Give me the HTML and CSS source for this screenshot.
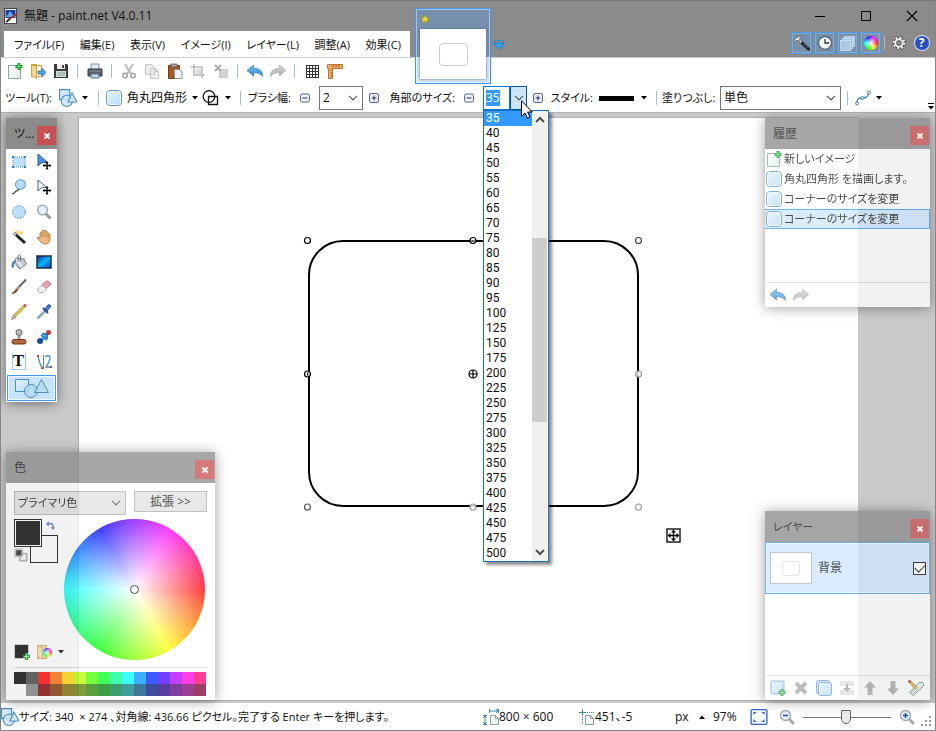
FILE: index.html
```html
<!DOCTYPE html>
<html lang="ja">
<head>
<meta charset="utf-8">
<title>無題 - paint.net V4.0.11</title>
<link rel="stylesheet" href="styles.css">
</head>
<body>
<svg class="defs" aria-hidden="true">
  <defs>
    <linearGradient id="g-blue" x1="0" y1="0" x2="0" y2="1"><stop offset="0" stop-color="#7cc0f0"/><stop offset="1" stop-color="#2f86cf"/></linearGradient>
    <linearGradient id="g-grey" x1="0" y1="0" x2="0" y2="1"><stop offset="0" stop-color="#d4d4d4"/><stop offset="1" stop-color="#aeaeae"/></linearGradient>
    <linearGradient id="g-pale" x1="0" y1="0" x2="1" y2="1"><stop offset="0" stop-color="#e4f2fd"/><stop offset="1" stop-color="#b9dbf4"/></linearGradient>
    <linearGradient id="g-grad" x1="0" y1="0" x2="1" y2="1"><stop offset="0" stop-color="#0030a0"/><stop offset=".5" stop-color="#08b4f8"/><stop offset="1" stop-color="#0540c0"/></linearGradient>
    <linearGradient id="g-page" x1="0" y1="0" x2="1" y2="1"><stop offset="0" stop-color="#ffffff"/><stop offset="1" stop-color="#dceee8"/></linearGradient>
  </defs>
  <symbol id="app" viewBox="0 0 16 16"><rect x="1.5" y=".5" width="12" height="15" fill="#fff" stroke="#444"/><rect x="2.5" y="2" width="10" height="8" fill="#153f9a"/><path d="M3 9l4-6 5 6z" fill="#5ca6ea"/><path d="M5 12l10-7" stroke="#a43c36" stroke-width="2"/><path d="M3 14l4-3" stroke="#333" stroke-width="2"/></symbol>
  <symbol id="new" viewBox="0 0 16 16"><path d="M1.500 2.500h12v13h-12z" fill="url(#g-page)" stroke="#8ba79f"/><path d="M12 0v7M8.500 3.500h7" stroke="#1c9b36" stroke-width="3"/><path d="M12 1v5M9.500 3.500h5" stroke="#5bdc62"/></symbol>
  <symbol id="open" viewBox="0 0 16 16"><path d="M1.500 1.500h5v12h-5z" fill="#efbf65" stroke="#c99337"/><path d="M5.500 2.500h6v11h-6z" fill="#fff" stroke="#d9a44c"/><path d="M1.500 1.500l5 2v12l-5-3z" fill="#f8d48c" stroke="#d6a045"/><path d="M8 8h4V5l4 4.500-4 4.500v-3H8z" fill="#4ba5e6" stroke="#2b74b3" stroke-width=".7"/></symbol>
  <symbol id="folder" viewBox="0 0 16 16"><path d="M1.500 1.500h9v13h-9z" fill="#efd9a8" stroke="#c9a357"/><path d="M1.500 1.500l5 2v12l-5-3z" fill="#f8e0ac" stroke="#d6a95d"/></symbol>
  <symbol id="save" viewBox="0 0 16 16"><path d="M1 1h13l1 1v13H1z" fill="#3b3b3b"/><path d="M4 1h8v5H4z" fill="#eee"/><path d="M9 2h2v3H9z" fill="#444"/><path d="M3 8h10v6H3z" fill="#cfe3dc"/><path d="M4 10h8M4 12h8" stroke="#8b9b96"/></symbol>
  <symbol id="print" viewBox="0 0 16 16"><path d="M4 1h8v6H4z" fill="#e4eef6" stroke="#889"/><path d="M1 6h14v7H1z" fill="#5a5f66" stroke="#363a40"/><path d="M2 8h12" stroke="#8c949d"/><path d="M4 11h8v4H4z" fill="#b3d7ee" stroke="#65727d"/></symbol>
  <symbol id="cut" viewBox="0 0 16 16"><path d="M4 1l6 10M12 1L6 11" stroke="#bdbdbd" stroke-width="2"/><circle cx="4" cy="12.500" r="2.300" fill="none" stroke="#a5a5a5" stroke-width="1.500"/><circle cx="12" cy="12.500" r="2.300" fill="none" stroke="#a5a5a5" stroke-width="1.500"/></symbol>
  <symbol id="copy" viewBox="0 0 16 16"><path d="M1.500 1.500h6l3 3v7h-9zM6.500 5.500h5l3 3v7h-8z" fill="#ededed" stroke="#c6c6c6"/><path d="M11.500 5.500v3h3" fill="none" stroke="#c6c6c6"/></symbol>
  <symbol id="paste" viewBox="0 0 16 16"><path d="M1.500 2.500h11v13h-11z" fill="#a65c2c" stroke="#6f3b17"/><path d="M4 1h6v3H4z" fill="#aaa" stroke="#555" stroke-width=".8"/><path d="M7.500 6.500h5l2.500 2v7h-7.500z" fill="#e9f2f6" stroke="#8295a0"/></symbol>
  <symbol id="crop" viewBox="0 0 16 16"><path d="M4 1v11h11M1 4h11v11" fill="none" stroke="#b9b9b9" stroke-width="1.500"/><path d="M6 6h5v5H6z" fill="#ddd"/></symbol>
  <symbol id="deselect" viewBox="0 0 16 16"><path d="M6.500 6.500h8v8h-8z" fill="#d4d4d4" stroke="#b8b8b8" stroke-dasharray="2 1"/><path d="M2 2l6 6M8 2L2 8" stroke="#aaa" stroke-width="2"/></symbol>
  <symbol id="undo" viewBox="0 0 16 16"><path d="M0 7.500L6.500 2v3.300c5 0 9 2 9.200 8.200-2-3-4.500-4-9.200-3.800V13z" fill="url(#g-blue)" stroke="#2b76b8" stroke-width=".7"/></symbol>
  <symbol id="redo" viewBox="0 0 16 16"><path d="M16 7.500L9.500 2v3.300c-5 0-9 2-9.200 8.200 2-3 4.500-4 9.200-3.800V13z" fill="url(#g-grey)" stroke="#b0b0b0" stroke-width=".7"/></symbol>
  <symbol id="grid" viewBox="0 0 16 16"><path d="M2 2.500h12.500M2 5.500h12.500M2 8.500h12.500M2 11.500h12.500M2 14.500h13M2.500 2v12.500M5.500 2v12.500M8.500 2v12.500M11.500 2v12.500M14.500 2v12.500" stroke="#333"/></symbol>
  <symbol id="ruler" viewBox="0 0 16 16"><path d="M.5 1.500h15v4h-10v10h-4v-10h-1z" fill="#eda961" stroke="#bd7634"/><path d="M6 2v2M9 2v2M12 2v2M4 7h1.500M4 10h1.500M4 13h1.500" stroke="#8d5424"/></symbol>
  <symbol id="shapes" viewBox="1 1 16 16"><path d="M1.500 1.500h9v9h-9z" fill="url(#g-pale)" stroke="#4c8fbf"/><circle cx="8" cy="11.500" r="5" fill="#c9e4f7" fill-opacity=".8" stroke="#4c8fbf"/><path d="M12.500 4.500l4.500 8H9z" fill="#d4eafa" fill-opacity=".8" stroke="#4c8fbf"/></symbol>
  <symbol id="wide-shapes" viewBox="0 0 36 22"><path d="M1.500 2.500h13v12h-13z" fill="url(#g-pale)" stroke="#4c8fbf"/><circle cx="17" cy="14" r="6.500" fill="#b5d9f3" fill-opacity=".8" stroke="#4c8fbf"/><path d="M27.500 2.500l7 13h-14z" fill="#b5d9f3" fill-opacity=".8" stroke="#4c8fbf"/></symbol>
  <symbol id="rounded" viewBox="0 0 16 16"><rect x=".5" y=".5" width="15" height="15" rx="3.500" fill="#fff" stroke="#5b97c2"/><rect x="2" y="2" width="12" height="12" rx="2" fill="url(#g-pale)"/></symbol>
  <symbol id="geometry" viewBox="0 0 18 18"><circle cx="7" cy="7.500" r="5.800" fill="none" stroke="#111" stroke-width="1.300"/><path d="M6.500 7.500h9v8h-9z" fill="none" stroke="#111" stroke-width="1.300"/></symbol>
  <symbol id="minus" viewBox="0 0 10 10"><rect x=".5" y="1" width="9" height="8" rx="1.500" fill="#eef1fb" stroke="#5b658c"/><path d="M2.500 5h5" stroke="#26315c"/></symbol>
  <symbol id="plus" viewBox="0 0 10 10"><rect x=".5" y=".5" width="9" height="9" rx="1.500" fill="#eef1fb" stroke="#5b658c"/><path d="M2.500 5h5M5 2.500v5" stroke="#26315c"/></symbol>
  <symbol id="caret" viewBox="0 0 6 4"><path d="M0 0h6L3 3.500z" fill="#000"/></symbol>
  <symbol id="chev" viewBox="0 0 10 6"><path d="M1 .8l4 4 4-4" fill="none" stroke="#555" stroke-width="1.200"/></symbol>
  <symbol id="curve" viewBox="0 0 16 16"><path d="M2 14c0-5 1-6 5-6s6-1 7-6" fill="none" stroke="#4b86b6" stroke-width="1.300"/><g fill="#fff" stroke="#3f7cae"><circle cx="2" cy="13.500" r="1.500"/><circle cx="7.500" cy="8" r="1.500"/><circle cx="14" cy="2.500" r="1.500"/></g></symbol>
  <symbol id="hammer" viewBox="0 0 18 18"><path d="M8 8l7.500 7" stroke="#1c1c1c" stroke-width="3" stroke-linecap="round"/><path d="M10 9.500l5 4.500" stroke="#777" stroke-width=".7"/><path d="M5.500 5.500l3 3" stroke="#c4cad2" stroke-width="2"/><path d="M1 8.500c0-3 2-6 8.500-6.500L6.500 4.500 7 6 5 7 4 6z" fill="#e6eaf0" stroke="#4a5968" stroke-width=".7"/></symbol>
  <symbol id="clock" viewBox="0 0 16 16"><circle cx="8" cy="8" r="6.500" fill="#f3f7f8" stroke="#596878" stroke-width="1.400"/><path d="M8 4v4h4" fill="none" stroke="#333" stroke-width="1.300"/></symbol>
  <symbol id="layers" viewBox="0 0 16 16"><g fill="#a3c5e4" stroke="#cfe3f4" stroke-width=".8"><rect x="4.500" y="1.500" width="10" height="10"/><rect x="2.500" y="3.500" width="10" height="10"/><rect x=".5" y="5.500" width="10" height="10" fill="#a9c9e6"/></g></symbol>
  <symbol id="gear" viewBox="0 0 16 16"><circle cx="8" cy="8" r="5.200" fill="none" stroke="#4a4a4a" stroke-width="4" stroke-dasharray="2.300 1.800"/><circle cx="8" cy="8" r="3.800" fill="none" stroke="#4a4a4a" stroke-width="3.500"/><circle cx="8" cy="8" r="5" fill="none" stroke="#eee" stroke-width="3" stroke-dasharray="1.700 2.230"/><circle cx="8" cy="8" r="3.700" fill="none" stroke="#eee" stroke-width="2"/></symbol>
  <symbol id="cross" viewBox="0 0 8 8"><path d="M1.500 1.500l5 5M6.500 1.500l-5 5" stroke="#fff" stroke-width="2"/></symbol>
  <symbol id="t-rect" viewBox="0 0 16 16"><rect x="2" y="3" width="12" height="10" fill="#bfe0fa" stroke="#4e90c8" stroke-dasharray="1 1"/><path d="M1 2h2v2H1zM13 2h2v2h-2zM1 12h2v2H1zM13 12h2v2h-2z" fill="#2f7fc6"/></symbol>
  <symbol id="t-move" viewBox="0 0 16 16"><path d="M2 0v12l3-3 6-1z" fill="#4b8edb" stroke="#2861a8"/><path d="M11 8v7M7.500 11.500h7" stroke="#111" stroke-width="1.500"/><path d="M11 7l1.500 2h-3zM11 16l1.500-2h-3zM6.500 11.500l2-1.500v3zM15.500 11.500l-2-1.500v3z"/></symbol>
  <symbol id="t-movesel" viewBox="0 0 16 16"><path d="M2 1v11l3-3 5-1z" fill="#fff" stroke="#4d6480"/><path d="M11 8v7M7.500 11.500h7" stroke="#111" stroke-width="1.500"/><path d="M11 7l1.500 2h-3zM11 16l1.500-2h-3zM6.500 11.500l2-1.500v3zM15.500 11.500l-2-1.500v3z"/></symbol>
  <symbol id="t-lasso" viewBox="0 0 16 16"><ellipse cx="9.500" cy="5.500" rx="5" ry="4.800" fill="#b9dcf8" stroke="#4f94cc"/><path d="M7 10c1 3-2 1-3 3s-1 1-3 2" fill="none" stroke="#444" stroke-width="1.300"/></symbol>
  <symbol id="t-ellipse" viewBox="0 0 16 16"><circle cx="8" cy="8" r="6.300" fill="#c0e0fa" stroke="#4b91cc" stroke-dasharray="2 1.300"/></symbol>
  <symbol id="t-zoom" viewBox="0 0 16 16"><path d="M9.500 9.500l5 5" stroke="#999" stroke-width="3"/><circle cx="6.500" cy="6" r="4.800" fill="#e4f1fa" stroke="#a3abb2" stroke-width="1.500"/></symbol>
  <symbol id="t-wand" viewBox="0 0 16 16"><path d="M3 4l11 10" stroke="#222" stroke-width="3"/><path d="M3 4l2 2" stroke="#ccc" stroke-width="2"/><path d="M7 1v4M5 3h4M10 2v4M8 4h4M3 0v2" stroke="#f0c642"/></symbol>
  <symbol id="t-pan" viewBox="0 0 16 16"><path d="M4 9V4q1-1.500 2 0V2q1-1.500 2 0V1.500q1-1.500 2 .5v1q1-1.500 2 .5V5q1-1 2 .5V10q0 5-5 5-3 0-5-3L1 9q1-2 3 0z" fill="#eab880" stroke="#ad6f35" stroke-width=".8"/><path d="M6 4v4M8 3v5M10 3.500V8M12 5v4" stroke="#ad6f35" stroke-width=".6"/></symbol>
  <symbol id="t-fill" viewBox="0 0 16 16"><path d="M5 4l8 1 2.500 5-7 5L3 8z" fill="#c4c9cf" stroke="#747b84"/><path d="M5 5l6 8" stroke="#f4f4f4" stroke-width="2"/><path d="M7 8V2q1.500-2 2.500 0v5" fill="none" stroke="#777"/><path d="M5 6C1 7 0 10 1 14l2-1c0-3 0-4 2-5z" fill="#4c7fc4"/></symbol>
  <symbol id="t-grad" viewBox="0 0 16 16"><rect x="1" y="2" width="14" height="12" fill="url(#g-grad)" stroke="#1b2a44" stroke-width="1.500"/></symbol>
  <symbol id="t-brush" viewBox="0 0 16 16"><path d="M15 .5L7 9" stroke="#5c6672" stroke-width="2"/><path d="M8 8l-3 3" stroke="#aaa" stroke-width="3"/><path d="M6 9.500L0 15q5 0 7-4z" fill="#7a4522"/></symbol>
  <symbol id="t-eraser" viewBox="0 0 16 16"><path d="M1 11l9-9q3-1 5 3l-8 8q-3 2-6-2z" fill="#f19eb1" stroke="#b2697a" stroke-width=".7"/><path d="M1 11l4.500-4.500 5.500 3.500-4 3.500q-3 1.500-6-2.500z" fill="#eee" stroke="#aaa" stroke-width=".7"/></symbol>
  <symbol id="t-pencil" viewBox="0 0 16 16"><path d="M13 2.500L3.500 12" stroke="#a58a2c" stroke-width="3"/><path d="M13 2.500L3.500 12" stroke="#f5d85e" stroke-width="1.500"/><path d="M15 .5l-2 2" stroke="#d25c52" stroke-width="3"/><path d="M.5 15.500L2.500 11 5 13.500z" fill="#e8c79c" stroke="#555" stroke-width=".6"/></symbol>
  <symbol id="t-picker" viewBox="0 0 16 16"><path d="M9.500 6.500L3 13l-1.500 1.500" stroke="#8da9c4" stroke-width="2.500"/><path d="M7 4l5 5" stroke="#27459c" stroke-width="2"/><path d="M9 5l3-4q2-1 3 1l-4 5z" fill="#4a7de2" stroke="#2a50a6"/></symbol>
  <symbol id="t-stamp" viewBox="0 0 16 16"><circle cx="8" cy="3.500" r="3" fill="#bbb" stroke="#666"/><path d="M7 6.500h2V11H7z" fill="#aaa" stroke="#777" stroke-width=".6"/><rect x="1" y="10.500" width="14" height="4.500" rx="2" fill="#b5683d" stroke="#713a1c"/></symbol>
  <symbol id="t-recolor" viewBox="0 0 16 16"><path d="M5 12l7-8" stroke="#4ea5dc" stroke-width="3"/><path d="M5 6l6 5M6 5h5v5" fill="none" stroke="#2886c6" stroke-width="2"/><circle cx="4" cy="12" r="3" fill="#1c4ea4"/><circle cx="12.500" cy="3.500" r="2.500" fill="#bd3d3d"/></symbol>
  <symbol id="t-line" viewBox="0 0 16 16"><path d="M2 2q1 6 4 12" fill="none" stroke="#4b94cc" stroke-width="1.400"/><path d="M7.500 1v14" stroke="#777"/><path d="M9 3q5-3 5 1 0 3-4 9h5" fill="none" stroke="#4b94cc" stroke-width="1.400"/><path d="M1 1h2v2H1zM5 13h2v2H5zM14 12h2v2h-2z" fill="#c44"/></symbol>
  <symbol id="swap" viewBox="0 0 10 10"><path d="M1 3h5q2 0 2 5" fill="none" stroke="#4d68c8" stroke-width="1.500"/><path d="M0 3l3-3v6zM8 10L5 7h5z" fill="#4d68c8"/></symbol>
  <symbol id="reset" viewBox="0 0 16 16"><path d="M6.500 6.500h8v8h-8z" fill="#fff" stroke="#aaa" stroke-width="2"/><path d="M1.500 1.500h8v8h-8z" fill="#222" stroke="#bbb" stroke-width="2"/></symbol>
  <symbol id="addcolor" viewBox="0 0 16 16"><path d="M.5.5h14v14H.5z" stroke="#ccc"/><path d="M12.500 9v7M9 12.500h7" stroke="#178533" stroke-width="3"/><path d="M12.500 10v5M10 12.500h5" stroke="#8ce894"/></symbol>
  <symbol id="l-add" viewBox="0 0 16 16"><rect x="1" y="1" width="13" height="13" rx="1" fill="url(#g-pale)" stroke="#7aabd0"/><path d="M12 9v7M8.500 12.500h7" stroke="#1d9b3c" stroke-width="3"/><path d="M12 10v5M9.500 12.500h5" stroke="#92ec99"/></symbol>
  <symbol id="l-del" viewBox="0 0 16 16"><path d="M3 3l10 10M13 3L3 13" stroke="#a9a9a9" stroke-width="4"/></symbol>
  <symbol id="l-dup" viewBox="0 0 16 16"><rect x=".5" y=".5" width="13" height="13" rx="2" fill="#c9e3f7" stroke="#6ba2cf"/><rect x="2.500" y="2.500" width="13" height="13" rx="2" fill="url(#g-pale)" stroke="#6ba2cf"/></symbol>
  <symbol id="l-merge" viewBox="0 0 16 16"><path d="M1 1h14v5H1zM1 10h14v5H1z" fill="#ddd"/><path d="M8 4v5" stroke="#a3a3a3" stroke-width="2"/><path d="M4 8h8l-4 4z" fill="#a3a3a3"/></symbol>
  <symbol id="l-up" viewBox="0 0 16 16"><path d="M8 1l6 6.500h-3.500V15h-5V7.500H2z" fill="#a9a9a9"/></symbol>
  <symbol id="l-down" viewBox="0 0 16 16"><path d="M8 15l6-6.500h-3.500V1h-5v7.500H2z" fill="#a9a9a9"/></symbol>
  <symbol id="l-prop" viewBox="0 0 16 16"><path d="M1.500 12.500L11 2.500h3.500l1 1V6L5.500 15.500z" fill="#dfeee8" stroke="#6f9186"/><path d="M4 12.500l4-4M6 13l4-4" stroke="#a8c1b8"/><path d="M1.500 1.500l7 7" stroke="#94751f" stroke-width="3"/><path d="M1.500 1.500l7 7" stroke="#f2cf56" stroke-width="1.500"/><path d="M.5.500l2 2" stroke="#c53d35" stroke-width="2.500"/></symbol>
  <symbol id="docsize" viewBox="0 0 16 16"><path d="M7 2h8M2 7v8M6.500 0v4M15.500 0v4M0 6.500h4M0 15.500h4" stroke="#3889b6"/><path d="M13 0l2 2-2 2M.5 9L2 7l1.500 2M.5 13L2 15l1.500-2" fill="none" stroke="#3889b6"/><path d="M7.500 6.500h5l3 3v6h-8z" fill="#f0f7f5" stroke="#88a39b"/><path d="M12.500 6.500v3h3" fill="none" stroke="#88a39b"/></symbol>
  <symbol id="cursorpos" viewBox="0 0 16 16"><path d="M0 3.500h7M3.500 0v7" stroke="#3889b6"/><path d="M8 3.500h8M3.500 8v8" stroke="#3889b6" stroke-dasharray="1 1"/><path d="M6.500 6.500h5l3 3v6h-8z" fill="#f0f7f5" stroke="#88a39b"/><path d="M11.500 6.500v3h3" fill="none" stroke="#88a39b"/></symbol>
  <symbol id="fit" viewBox="0 0 16 16"><rect x="1" y="1.500" width="14" height="13" rx="1" fill="#f6f9ff" stroke="#3c62d6" stroke-width="1.200"/><path d="M3 6V3.500h3zM10 3.500h3V6zM3 10v2.500h3zM13 10v2.500h-3z" fill="#3c62d6"/></symbol>
  <symbol id="z-out" viewBox="0 0 16 16"><path d="M10 10l5 5" stroke="#aaa" stroke-width="3"/><circle cx="6.500" cy="6.500" r="5" fill="#e3f0fb" stroke="#9faab4" stroke-width="1.300"/><path d="M4 6.500h5" stroke="#2648b0" stroke-width="1.500"/></symbol>
  <symbol id="z-in" viewBox="0 0 16 16"><path d="M10 10l5 5" stroke="#aaa" stroke-width="3"/><circle cx="6.500" cy="6.500" r="5" fill="#e3f0fb" stroke="#9faab4" stroke-width="1.300"/><path d="M4 6.500h5M6.500 4v5" stroke="#2648b0" stroke-width="1.500"/></symbol>
</svg>

<header class="top">
  <div class="titlebar">
    <svg class="i16"><use href="#app"/></svg>
    <h1>無題 - paint.net V4.0.11</h1>
    <div class="winbtns">
      <button aria-label="最小化"><svg class="i12" viewBox="0 0 12 12"><path d="M1 6.500h10" stroke="#000"/></svg></button>
      <button aria-label="最大化"><svg class="i12" viewBox="0 0 12 12"><path d="M1.500 1.500h9v9h-9z" fill="none" stroke="#000"/></svg></button>
      <button aria-label="閉じる"><svg class="i12" viewBox="0 0 12 12"><path d="M1 1l10 10M11 1L1 11" stroke="#000" stroke-width="1.100"/></svg></button>
    </div>
  </div>
  <div class="menurow">
    <nav class="menu">
      <button>ファイル(F)</button><button>編集(E)</button><button>表示(V)</button><button>イメージ(I)</button><button>レイヤー(L)</button><button>調整(A)</button><button>効果(C)</button>
    </nav>
    <div class="docs">
      <button class="doc" aria-label="無題">
        <svg class="star" viewBox="0 0 10 10"><path d="M5 .5l1.400 3 3.100.3-2.300 2.200.7 3.200L5 7.500 2.100 9.200l.7-3.200L.5 3.800l3.100-.3z" fill="#e5d73f" stroke="#8c8430" stroke-width=".7"/></svg>
        <span class="sheet"><span class="mini"></span></span>
      </button>
    </div>
    <button class="doclist" aria-label="画像の一覧"><svg viewBox="0 0 12 12"><path d="M1 2.500h10" stroke="#1687e0" stroke-dasharray="2 1"/><path d="M1 5h10v1L6 11 1 6z" fill="#32a5f5" stroke="#1273c4" stroke-width=".8"/></svg></button>
    <div class="toggles">
      <button class="on" aria-label="ツール"><svg class="i18"><use href="#hammer"/></svg></button>
      <button class="on" aria-label="履歴"><svg class="i16"><use href="#clock"/></svg></button>
      <button class="on" aria-label="レイヤー"><svg class="i16"><use href="#layers"/></svg></button>
      <button class="on" aria-label="色"><span class="hue small"></span></button>
      <i class="sep"></i>
      <button aria-label="設定"><svg class="i16"><use href="#gear"/></svg></button>
      <button aria-label="ヘルプ"><span class="help">?</span></button>
    </div>
  </div>
</header>

<div class="toolbar" role="toolbar">
  <button aria-label="新規"><svg class="i16"><use href="#new"/></svg></button>
  <button aria-label="開く"><svg class="i16"><use href="#open"/></svg></button>
  <button aria-label="保存"><svg class="i16"><use href="#save"/></svg></button>
  <i class="sep"></i>
  <button aria-label="印刷"><svg class="i16"><use href="#print"/></svg></button>
  <i class="sep"></i>
  <button aria-label="切り取り"><svg class="i16"><use href="#cut"/></svg></button>
  <button aria-label="コピー"><svg class="i16"><use href="#copy"/></svg></button>
  <button aria-label="貼り付け"><svg class="i16"><use href="#paste"/></svg></button>
  <button aria-label="トリミング"><svg class="i16"><use href="#crop"/></svg></button>
  <button aria-label="選択の解除"><svg class="i16"><use href="#deselect"/></svg></button>
  <i class="sep"></i>
  <button aria-label="元に戻す"><svg class="i16"><use href="#undo"/></svg></button>
  <button aria-label="やり直し"><svg class="i16"><use href="#redo"/></svg></button>
  <i class="sep"></i>
  <button aria-label="グリッド"><svg class="i16"><use href="#grid"/></svg></button>
  <button aria-label="ルーラー"><svg class="i16"><use href="#ruler"/></svg></button>
</div>

<div class="options" role="toolbar">
  <span class="lbl">ツール(T):</span>
  <button class="drop" aria-label="ツールの選択"><svg class="i18"><use href="#shapes"/></svg><svg class="caret"><use href="#caret"/></svg></button>
  <i class="sep"></i>
  <button class="drop"><svg class="i16"><use href="#rounded"/></svg>角丸四角形<svg class="caret"><use href="#caret"/></svg></button>
  <button class="drop" aria-label="描画モード"><svg class="i18"><use href="#geometry"/></svg><svg class="caret"><use href="#caret"/></svg></button>
  <i class="sep"></i>
  <label class="lbl" for="brush">ブラシ幅:</label>
  <button aria-label="ブラシ幅を減らす"><svg class="i10"><use href="#minus"/></svg></button>
  <span class="pick narrow"><select id="brush"><option>2</option></select><svg class="chev"><use href="#chev"/></svg></span>
  <button aria-label="ブラシ幅を増やす"><svg class="i10"><use href="#plus"/></svg></button>
  <label class="lbl" for="corner">角部のサイズ:</label>
  <button aria-label="サイズを減らす"><svg class="i10"><use href="#minus"/></svg></button>
  <div class="combo">
    <span class="field"><input id="corner" type="text" value="35"></span>
    <button class="arrow" aria-label="一覧を開く"><svg class="chev"><use href="#chev"/></svg></button>
    <div class="popup">
      <ul id="sizes" role="listbox" aria-label="角部のサイズ"></ul>
      <div class="scroll">
        <svg class="chev" viewBox="0 0 10 6"><path d="M1 5l4-4 4 4" fill="none" stroke="#505050" stroke-width="2"/></svg>
        <div class="before"></div><div class="thumb"></div><div class="after"></div>
        <svg class="chev" viewBox="0 0 10 6"><path d="M1 1l4 4 4-4" fill="none" stroke="#505050" stroke-width="2"/></svg>
      </div>
    </div>
    <svg class="pointer" viewBox="0 0 12 19"><path d="M.5.800v15.500l3.600-3.300 2.300 5.300 2.500-1.100-2.300-5.200h4.700z" fill="#fff" stroke="#000"/></svg>
  </div>
  <button aria-label="サイズを増やす"><svg class="i10"><use href="#plus"/></svg></button>
  <span class="lbl">スタイル:</span>
  <button class="drop style" aria-label="線のスタイル"><span class="stroke"></span><svg class="caret"><use href="#caret"/></svg></button>
  <i class="sep"></i>
  <label class="lbl" for="fill">塗りつぶし:</label>
  <span class="pick"><select id="fill"><option>単色</option></select><svg class="chev"><use href="#chev"/></svg></span>
  <i class="sep"></i>
  <button class="drop" aria-label="曲線の種類"><svg class="i16"><use href="#curve"/></svg><svg class="caret"><use href="#caret"/></svg></button>
  <button class="more" aria-label="その他"><svg viewBox="0 0 6 7"><path d="M0 .5h6" stroke="#000"/><path d="M0 3h6L3 6.500z"/></svg></button>
</div>

<main class="workspace">
  <div class="canvas">
    <svg viewBox="0 1 779 582" preserveAspectRatio="xMinYMin meet" role="img" aria-label="角丸四角形">
      <rect x="230" y="124" width="329" height="265" rx="34" fill="none" stroke="#000" stroke-width="2"/>
      <g fill="#fff" fill-opacity=".8" stroke="#000" stroke-width="1.200">
        <circle cx="228.500" cy="123.500" r="3"/><circle cx="394" cy="123.500" r="3"/><circle cx="559.500" cy="123.500" r="3" stroke="#444"/>
        <circle cx="228.500" cy="257" r="3"/><circle cx="394" cy="257" r="4"/>
        <circle cx="228.500" cy="390" r="3" stroke="#555"/>
        <g stroke="#999"><circle cx="559.500" cy="257" r="3"/><circle cx="394" cy="390" r="3"/><circle cx="559.500" cy="390" r="3"/></g>
      </g>
      <path d="M390 257h8M394 253v8" stroke="#000" stroke-width="1.200"/>
      <path d="M228.500 255.500v3M392.500 124h3" stroke="#000"/>
      <path d="M588 412h13v13h-13z" fill="#fff" stroke="#222" stroke-width="1.500"/>
      <path d="M594.500 414v9M590 418.500h9" stroke="#000" stroke-width="1.300"/>
      <path d="M594.500 412.500l2.500 3h-5zM594.500 424.500l2.500-3h-5zM588.500 418.500l3-2.500v5zM600.500 418.500l-3-2.500v5z"/>
    </svg>
  </div>

  <section class="panel tools" aria-label="ツール">
    <div class="cap"><h2>ツ...</h2><button class="close" aria-label="閉じる"><svg><use href="#cross"/></svg></button></div>
    <div class="toolgrid">
      <button aria-label="四角形選択"><svg class="i16"><use href="#t-rect"/></svg></button>
      <button aria-label="ピクセルの移動"><svg class="i16"><use href="#t-move"/></svg></button>
      <button aria-label="投げ縄選択"><svg class="i16"><use href="#t-lasso"/></svg></button>
      <button aria-label="選択範囲の移動"><svg class="i16"><use href="#t-movesel"/></svg></button>
      <button aria-label="楕円選択"><svg class="i16"><use href="#t-ellipse"/></svg></button>
      <button aria-label="ズーム"><svg class="i16"><use href="#t-zoom"/></svg></button>
      <button aria-label="魔法の杖"><svg class="i16"><use href="#t-wand"/></svg></button>
      <button aria-label="パン"><svg class="i16"><use href="#t-pan"/></svg></button>
      <button aria-label="塗りつぶし"><svg class="i16"><use href="#t-fill"/></svg></button>
      <button aria-label="グラデーション"><svg class="i16"><use href="#t-grad"/></svg></button>
      <button aria-label="ブラシ"><svg class="i16"><use href="#t-brush"/></svg></button>
      <button aria-label="消しゴム"><svg class="i16"><use href="#t-eraser"/></svg></button>
      <button aria-label="鉛筆"><svg class="i16"><use href="#t-pencil"/></svg></button>
      <button aria-label="カラーピッカー"><svg class="i16"><use href="#t-picker"/></svg></button>
      <button aria-label="クローンスタンプ"><svg class="i16"><use href="#t-stamp"/></svg></button>
      <button aria-label="色の変更"><svg class="i16"><use href="#t-recolor"/></svg></button>
      <button aria-label="テキスト"><span class="glyph">T</span></button>
      <button aria-label="直線または曲線"><svg class="i16"><use href="#t-line"/></svg></button>
      <button class="current" aria-label="図形"><svg><use href="#wide-shapes"/></svg></button>
    </div>
  </section>

  <section class="panel history" aria-label="履歴">
    <div class="cap"><h2>履歴</h2><button class="close" aria-label="閉じる"><svg><use href="#cross"/></svg></button></div>
    <ul>
      <li><svg class="i16"><use href="#new"/></svg>新しいイメージ</li>
      <li><svg class="i16"><use href="#rounded"/></svg>角丸四角形 を描画します。</li>
      <li><svg class="i16"><use href="#rounded"/></svg>コーナーのサイズを変更</li>
      <li class="sel"><svg class="i16"><use href="#rounded"/></svg>コーナーのサイズを変更</li>
    </ul>
    <div class="foot">
      <button aria-label="元に戻す"><svg class="i16"><use href="#undo"/></svg></button>
      <button aria-label="やり直し"><svg class="i16"><use href="#redo"/></svg></button>
    </div>
  </section>

  <section class="panel colors" aria-label="色">
    <div class="cap"><h2>色</h2><button class="close" aria-label="閉じる"><svg><use href="#cross"/></svg></button></div>
    <div class="row">
      <span class="pick soft"><select aria-label="編集する色"><option>プライマリ色</option></select><svg class="chev"><use href="#chev"/></svg></span>
      <button class="expand">拡張 &gt;&gt;</button>
    </div>
    <div class="mix">
      <div class="side">
        <div class="pair">
          <button class="primary" aria-label="プライマリ"></button>
          <button class="swap" aria-label="入れ替え"><svg><use href="#swap"/></svg></button>
          <button class="reset" aria-label="白黒に戻す"><svg><use href="#reset"/></svg></button>
          <button class="secondary" aria-label="セカンダリ"></button>
        </div>
        <div class="acts">
          <button aria-label="色を追加"><svg class="i16"><use href="#addcolor"/></svg></button>
          <button class="drop" aria-label="パレット"><span class="folder"><svg class="i16"><use href="#folder"/></svg><span class="hue dot"></span></span><svg class="caret"><use href="#caret"/></svg></button>
        </div>
      </div>
      <div class="hue wheel"><span class="mark"></span></div>
    </div>
    <div class="palette" id="palette"></div>
  </section>

  <section class="panel layerlist" aria-label="レイヤー">
    <div class="cap"><h2>レイヤー</h2><button class="close" aria-label="閉じる"><svg><use href="#cross"/></svg></button></div>
    <div class="layer">
      <span class="thumbnail"><span class="mini"></span></span>
      <label for="visible">背景</label>
      <input type="checkbox" id="visible" checked>
    </div>
    <div class="foot">
      <button aria-label="追加"><svg class="i16"><use href="#l-add"/></svg></button>
      <button aria-label="削除"><svg class="i16"><use href="#l-del"/></svg></button>
      <button aria-label="複製"><svg class="i16"><use href="#l-dup"/></svg></button>
      <button aria-label="結合"><svg class="i16"><use href="#l-merge"/></svg></button>
      <button aria-label="上へ"><svg class="i16"><use href="#l-up"/></svg></button>
      <button aria-label="下へ"><svg class="i16"><use href="#l-down"/></svg></button>
      <button aria-label="プロパティ"><svg class="i16"><use href="#l-prop"/></svg></button>
    </div>
  </section>
</main>

<footer class="status">
  <span class="msg"><svg class="i18"><use href="#shapes"/></svg>サイズ: 340 &nbsp;× 274 、対角線: 436.66 ピクセル。完了する Enter キーを押します。</span>
  <span><svg class="i16"><use href="#docsize"/></svg>800 × 600</span>
  <span><svg class="i16"><use href="#cursorpos"/></svg>451、-5</span>
  <button class="unit">px<svg class="caret up"><use href="#caret"/></svg></button>
  <span>97%</span>
  <button aria-label="ウィンドウに合わせる"><svg class="i18"><use href="#fit"/></svg></button>
  <button aria-label="縮小"><svg class="i16"><use href="#z-out"/></svg></button>
  <input type="range" min="0" max="100" value="49" aria-label="ズーム">
  <button aria-label="拡大"><svg class="i16"><use href="#z-in"/></svg></button>
  <svg class="grip" viewBox="0 0 10 10"><path d="M8 0h2v2H8zM4 4h2v2H4zM8 4h2v2H8zM0 8h2v2H0zM4 8h2v2H4zM8 8h2v2H8z" fill="#999"/></svg>
</footer>
<script src="script.js"></script>
</body>
</html>
```
FILE: styles.css
```css
* { box-sizing: border-box; }
html, body { height: 100%; }
body {
  margin: 0;
  display: flex;
  flex-direction: column;
  border: 1px solid #858585;
  border-top-color: #777;
  background: #cacaca;
  color: #111;
  font: 12px/16px "Open Sans", "Noto Sans CJK JP", sans-serif;
  font-feature-settings: "palt";
  overflow: hidden;
}
button, input, select {
  font: inherit;
  font-feature-settings: inherit;
  color: inherit;
  margin: 0;
}
button {
  display: flex;
  align-items: center;
  justify-content: center;
  padding: 0;
  border: 0;
  background: none;
  white-space: nowrap;
}
h1, h2 { margin: 0; font-size: 12px; font-weight: 400; white-space: nowrap; }
ul { list-style: none; margin: 0; padding: 0; }
svg { display: block; flex: none; overflow: visible; }
.defs { position: absolute; width: 0; height: 0; }
.i10 { width: 10px; height: 10px; }
.i12 { width: 12px; height: 12px; }
.i16 { width: 16px; height: 16px; }
.i18 { width: 18px; height: 18px; }
.caret { width: 6px; height: 4px; }
.chev { width: 10px; height: 6px; }
.sep { width: 1px; height: 14px; background: #a9bccb; justify-self: center; }
.menu, .lbl, .msg, .history li, .layerlist h2, .soft { font-size: 11px; }

/* Title bar and menu */
.top { background: #8b8b8b; flex: none; }
.titlebar { display: flex; align-items: center; height: 30px; padding-left: 2px; gap: 5px; }
.winbtns { display: flex; margin-left: auto; }
.winbtns button { width: 46px; height: 28px; }
.menurow { display: flex; align-items: center; height: 26px; padding-left: 3px; }
.menu {
  display: flex;
  align-items: center;
  justify-content: space-between;
  width: 406px;
  height: 26px;
  padding: 2px 9px 0 10px;
  background: #fff;
}
.docs { position: relative; align-self: stretch; width: 76px; margin-left: 5px; }
.doc {
  position: absolute;
  left: 0;
  top: -23px;
  z-index: 5;
  width: 76px;
  height: 76px;
  flex-direction: column;
  align-items: stretch;
  justify-content: flex-start;
  padding: 5px 4px 4px;
  gap: 5px;
  border: 1px solid #3d97ee;
  box-shadow: inset 0 0 0 1px rgba(255,255,255,.45);
  background: linear-gradient(#7690ad 48px, #d0e4f8 48px);
}
.star { width: 10px; height: 10px; }
.sheet { display: grid; place-items: center; flex: 1; background: #fff; box-shadow: 0 0 2px #41658c; }
.mini { width: 29px; height: 23px; border: 1px solid #ccc; border-radius: 4px; }
.doclist { margin-left: 2px; }
.doclist svg { width: 12px; height: 12px; }
.toggles { display: flex; align-items: center; gap: 2px; margin-left: auto; padding: 0 3px 2px 0; }
.toggles button { width: 21px; height: 22px; }
.toggles .sep { margin: 0 1px; background: #b5b5b5; }
.toggles .on { border: 1px solid #429bf2; background: #7690ad; box-shadow: inset 0 0 0 1px #8fa6bd; }
.help {
  width: 14px;
  height: 14px;
  border-radius: 50%;
  background: #2850c4;
  box-shadow: 0 0 0 1px #d7def0;
  color: #fff;
  font-weight: 700;
  line-height: 14px;
}

/* Toolbars */
.toolbar { display: flex; align-items: center; gap: 3px; flex: none; height: 27px; padding-left: 4px; background: #fff; border-top: 1px solid #ccc; }
.toolbar button { width: 20px; height: 22px; }
.toolbar .sep { margin: 0 4px 0 3px; }
.options {
  display: grid;
  grid-template-columns: 53px 36px 11px 96px 34px 12px 50px 18px 54px 12px 80px 18px 54px 12px 54px 52px 12px 58px 121px 12px 35px 1fr;
  align-items: center;
  flex: none;
  height: 28px;
  padding-left: 3px;
  background: #fff;
}
.lbl { padding-right: 5px; text-align: right; white-space: nowrap; }
.drop { justify-content: flex-start; gap: 5px; height: 22px; padding-left: 2px; }
.stroke { width: 35px; height: 5px; background: #000; }
.style { gap: 7px; padding-left: 1px; }
.more { justify-self: end; align-self: end; width: 8px; height: 12px; }
.more svg { width: 6px; height: 7px; }
.pick { display: grid; align-items: center; height: 24px; border: 1px solid #767676; background: #fff; }
.pick.narrow { width: 44px; justify-self: center; }
.pick select, .pick .chev { grid-area: 1 / 1; }
.pick select { appearance: none; width: 100%; height: 22px; padding: 0 3px; border: 0; background: none; outline: 0; }
.pick .chev { justify-self: end; margin-right: 4px; pointer-events: none; }
.combo { position: relative; display: flex; justify-self: center; width: 44px; height: 24px; }
.field { display: flex; align-items: center; width: 27px; padding-left: 2px; border: 1px solid #0078d7; background: #fff; }
.field input { width: 14px; height: 16px; padding: 0; border: 0; outline: 0; background: #3399ff; color: #fff; }
.arrow { width: 17px; border: 1px solid #005499; background: #cce4f7; }
.popup {
  position: absolute;
  left: 0;
  top: 24px;
  z-index: 20;
  display: flex;
  width: 66px;
  padding-right: 1px;
  border: 1px solid #1670b5;
  background: #fff;
  box-shadow: 3px 3px 3px rgba(0,0,0,.45);
  font-family: Roboto, sans-serif;
}
.popup ul { flex: 1; }
.popup li { height: 15px; padding-left: 2px; line-height: 15px; }
.popup li[aria-selected="true"] { background: #3399ff; color: #fff; }
.scroll { display: flex; flex-direction: column; align-items: center; width: 15px; padding: 6px 0; background: #f0f0f0; }
.before { flex: 115; }
.thumb { flex: 183; width: 15px; background: #cdcdcd; }
.after { flex: 127; }
.pointer { position: absolute; left: 38px; top: 14px; z-index: 21; width: 12px; height: 19px; }

/* Canvas area */
.workspace { position: relative; display: flex; flex: 1; min-height: 0; padding: 4px 77px 2px 77px; border-top: 1px solid #b2b2b2; background: #cacaca; }
.canvas { flex: 1; border: 1px solid #b0b0b0; border-right: 0; background: #fff; }
.canvas svg { width: 100%; height: 100%; }

/* Floating windows */
.panel { position: absolute; display: flex; flex-direction: column; background: #fff; box-shadow: 0 1px 12px rgba(0,0,0,.5); opacity: .76; }
.cap { display: flex; align-items: center; justify-content: space-between; flex: none; height: 31px; padding: 0 1px 0 8px; background: #8b8b8b; }
.close { align-self: end; width: 19px; height: 19px; margin-bottom: 4px; background: #c75050; }
.close svg { width: 8px; height: 8px; }
.tools { left: 5px; top: 5px; width: 51px; opacity: 1; }
.toolgrid { display: grid; grid-template-columns: 25px 25px; grid-auto-rows: 25px; padding-bottom: 3px; }
.toolgrid .current { grid-column: 1 / 3; height: 26px; margin: 1px 0 0 1px; border: 1px solid #3f9af0; box-shadow: inset 0 0 0 1px #eef7ff; background: #c9e3fc; }
.current svg { width: 36px; height: 22px; }
.glyph { width: 14px; border: solid #9fc6e6; border-width: 0 1px 1px; font: 700 17px/16px "Liberation Serif", serif; }
.history { right: 5px; top: 5px; width: 165px; height: 189px; }
.history ul { flex: 1; }
.history li { display: flex; align-items: center; gap: 2px; height: 20px; padding-left: 1px; white-space: nowrap; border: 1px solid transparent; border-left-width: 0; }
.history .sel { border-color: #3f9af0; background: #cfe6ff; }
.foot { display: flex; align-items: center; gap: 3px; flex: none; height: 25px; padding-left: 3px; border-top: 1px solid #d8d8d8; }
.foot button { width: 20px; height: 20px; }
.layerlist { right: 5px; bottom: 3px; width: 165px; height: 189px; }
.layer { display: flex; align-items: center; gap: 6px; height: 52px; margin-bottom: auto; padding: 0 3px 0 4px; border: 1px solid #3f9af0; box-shadow: inset 0 0 0 1px #eef7ff; background: #cfe6ff; }
.thumbnail { display: grid; place-items: center; width: 42px; height: 32px; border: 1px solid #aab8c8; background: #fff; }
.thumbnail .mini { width: 18px; height: 15px; border-color: #ddd; border-radius: 3px; }
.layer input {
  appearance: none;
  width: 13px;
  height: 13px;
  margin-left: auto;
  border: 1px solid #111;
  background: #fff;
}
.layer input:checked::after {
  content: "";
  display: block;
  width: 9px;
  height: 5px;
  margin: 1px;
  border: solid #111;
  border-width: 0 0 1px 1px;
  transform: rotate(-45deg);
}
.colors { left: 5px; bottom: 3px; width: 209px; height: 248px; }
.row { display: flex; align-items: flex-start; gap: 8px; padding: 8px 8px 0; }
.pick.soft { width: 112px; border-color: #adadad; background: #e1e1e1; }
.expand { flex: 1; height: 21px; border: 1px solid #adadad; background: #e1e1e1; }
.mix { display: flex; justify-content: space-between; flex: 1; padding: 4px 10px 0 8px; }
.side { display: flex; flex-direction: column; justify-content: space-between; width: 50px; }
.pair { display: grid; grid-template: repeat(11, 4px) / repeat(11, 4px); }
.primary { grid-area: 1 / 1 / 8 / 8; border: 1px solid #000; box-shadow: inset 0 0 0 1px #fff; background: #000; z-index: 1; }
.secondary { grid-area: 5 / 5 / 12 / 12; border: 1px solid #000; background: #fff; }
.swap { grid-area: 1 / 9 / 4 / 11; }
.swap svg { width: 9px; height: 9px; }
.reset { grid-area: 8 / 1 / 12 / 5; justify-content: flex-start; }
.reset svg { width: 14px; height: 14px; }
.acts { display: flex; gap: 4px; padding-bottom: 7px; }
.acts .drop { height: 16px; gap: 6px; }
.folder { position: relative; }
.hue {
  display: block;
  border-radius: 50%;
  background: radial-gradient(closest-side, #fff, rgba(255,255,255,0)), conic-gradient(from 90deg, #f00, #ff0, #0f0, #0ff, #00f, #f0f, #f00);
}
.small { width: 14px; height: 14px; }
.dot { position: absolute; right: 0; top: 4px; width: 9px; height: 9px; }
.wheel { display: grid; place-items: center; width: 141px; height: 141px; }
.mark { width: 9px; height: 9px; border: 1px solid #111; border-radius: 50%; background: #fff; }
.palette { display: grid; grid-template-columns: repeat(16, 12px); grid-auto-rows: 12px; margin: 0 8px; padding: 4px 0; border-top: 1px solid #c9d8e4; }

/* Status bar */
.status {
  display: grid;
  grid-template-columns: 1fr 96px 96px 38px 32px 28px 28px 92px 28px 14px;
  align-items: center;
  flex: none;
  height: 27px;
  padding-top: 1px;
  background: #fff;
}
.status span { display: flex; align-items: center; white-space: nowrap; }
.unit { justify-content: flex-start; gap: 10px; }
.up { transform: rotate(180deg); }
.grip { width: 10px; height: 10px; align-self: end; margin-bottom: 4px; }
.status input { appearance: none; width: 88px; height: 16px; justify-self: center; background: linear-gradient(#777, #777) center / 100% 1px no-repeat; }
.status input::-webkit-slider-thumb { appearance: none; width: 10px; height: 14px; border: 1px solid #666; border-radius: 1px 1px 5px 5px; background: #e9e9e9; }
```
FILE: script.js
```js
const sizes = document.getElementById('sizes');
for (let n = 35; n <= 500; n += n < 100 ? 5 : 25) {
  const li = document.createElement('li');
  li.textContent = n;
  li.setAttribute('role', 'option');
  li.setAttribute('aria-selected', n === 35);
  sizes.append(li);
}

const colors = [
  '#000000', '#404040', '#ff0000', '#ff6a00', '#ffd800', '#b6ff00', '#4cff00', '#00ff21',
  '#00ff90', '#00ffff', '#0094ff', '#0026ff', '#4800ff', '#b200ff', '#ff00dc', '#ff006e',
  '#ffffff', '#808080', '#7f0000', '#7f3300', '#7f6a00', '#5b7f00', '#267f00', '#007f0e',
  '#007f46', '#007f7f', '#004a7f', '#00137f', '#21007f', '#57007f', '#7f006e', '#7f0037'
];
const palette = document.getElementById('palette');
for (const color of colors) {
  const swatch = document.createElement('button');
  swatch.style.background = color;
  swatch.setAttribute('aria-label', color);
  palette.append(swatch);
}
```
